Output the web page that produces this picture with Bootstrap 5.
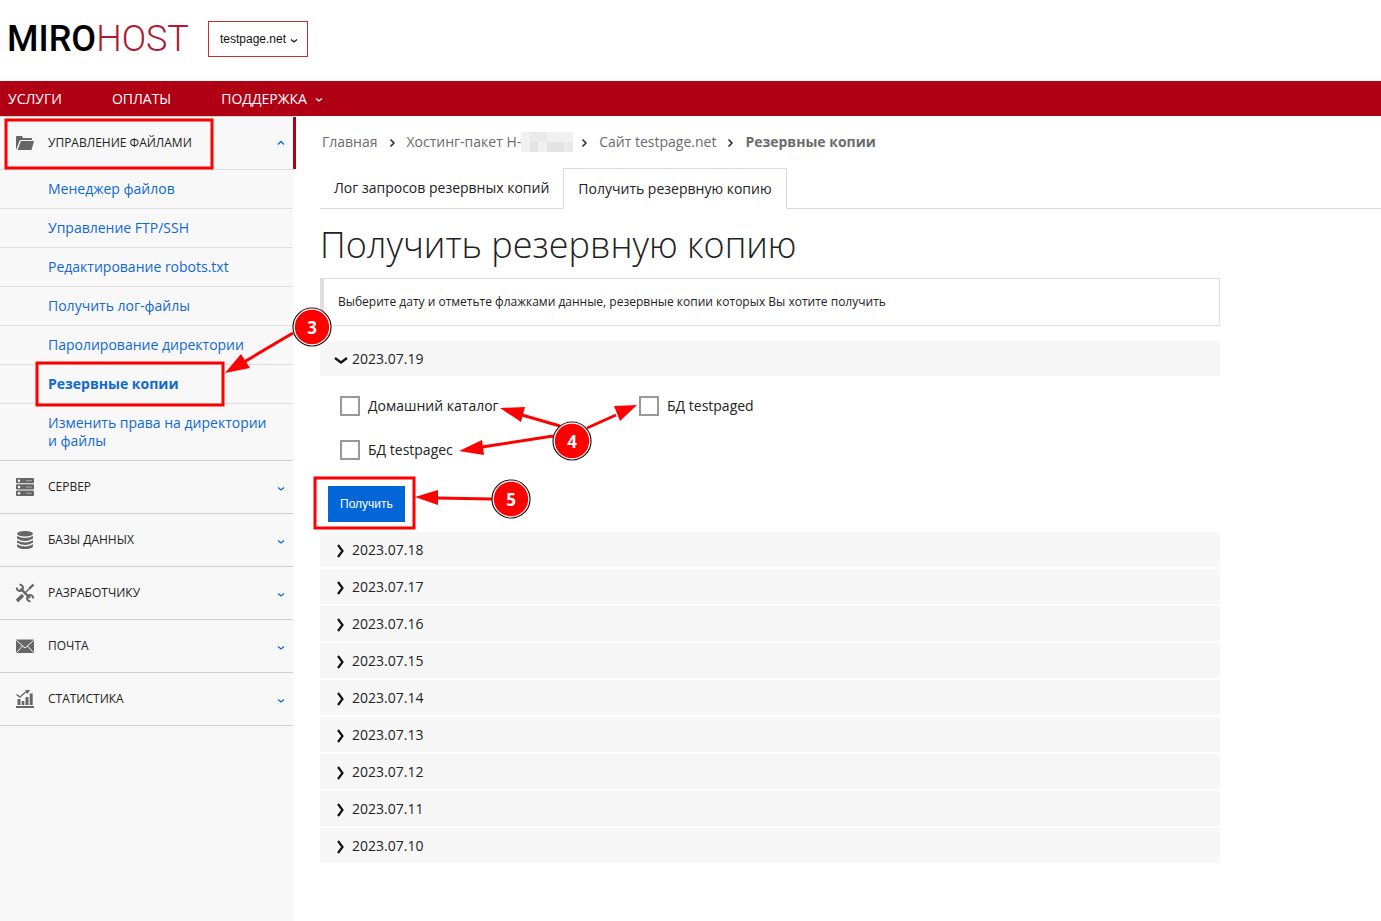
<!DOCTYPE html>
<html lang="ru">
<head>
<meta charset="utf-8">
<meta name="viewport" content="width=device-width, initial-scale=1">
<title>Получить резервную копию</title>
<link href="https://cdn.jsdelivr.net/npm/bootstrap@5.3.0/dist/css/bootstrap.min.css" rel="stylesheet">
<style>
body{font-family:"Open Sans","Noto Sans",sans-serif;font-size:14px;line-height:18px;color:#222;background:#fff}
a{text-decoration:none}
.top-bar{height:81px;padding:0 8px 4px 7px}
.logo-text{font-family:Roboto,sans-serif;font-size:36px;line-height:36px;font-weight:500;color:#000;width:181px}
.logo-text span{font-weight:300;color:#ae1a31}
.site-btn{font-family:"Liberation Sans",Arial,sans-serif;font-size:12px;line-height:18px;border:1px solid #c9302c;border-radius:0;padding:8px 9px 8px 11px;color:#111;margin-left:20px}
.main-nav{background:#b00014;min-height:35px;padding:0 8px;gap:50px}
.main-nav a{color:#fff;line-height:35px}
.side-menu{width:293px;background:#f8f8f8;border-top:1px solid #cfcfcf}
.group-btn{height:52px;padding:0 8px 0 15px;border:0;background:none;font-size:12px;color:#222;width:100%;text-align:left}
.group-btn .group-icon{width:20px;height:20px;margin-right:13px;color:#666}
.group-btn.current{width:296px;border-right:3px solid #b00014}
.side-group{border-bottom:1px solid #cfcfcf}
.side-links a{display:block;padding:10px 16px 10px 48px;border-top:1px solid #dedede;color:#1068d4}
.chev{width:8px;height:8px;fill:none;stroke:currentColor;stroke-width:1.3}
.blue{color:#1068d4}
.page-main{padding:16px 0 0 27px}
.crumbs{padding:0 2px;gap:12px;color:#6b6b6b}
.crumbs a{color:#6b6b6b}
.crumb-sep{width:5px;height:10px;margin-top:2px;fill:none;stroke:#222;stroke-width:1.5}
.hidden-id{width:52px;height:20px;margin-right:-3px}
.page-tabs{margin-top:16px;border-bottom:1px solid #dadada}
.page-tabs .nav-link{border:1px solid transparent;border-radius:0;padding:9px 13px 11px;color:#222;margin-bottom:-1px;line-height:19px}
.page-tabs .nav-link.active{border-color:#dadada #dadada #fff;color:#222;background:#fff;padding:10px 14px}
.page-title{font-size:36px;line-height:48px;font-weight:300;margin:12px 0 9px}
.content-col{max-width:900px}
.note{border:1px solid #dedede;border-left-width:4px;padding:14px;font-size:12px;margin-bottom:15px}
.date-btn{height:35px;border:0;background:#f7f7f7;width:100%;text-align:left;padding:0 14px;gap:4px;color:#222}
.date-btn svg{width:14px;height:14px;margin-top:3px;fill:none;stroke:#111;stroke-width:2.2}
.date-list{display:grid;gap:2px}
.copies{padding:20px 20px 26px;display:grid;grid-template-columns:299px 1fr;gap:24px 0}
.copies label{display:flex;align-items:center;gap:8px}
.copies .form-check-input[type=checkbox]{width:20px;height:20px;margin:0;border:2px solid #999;border-radius:0}
.get-btn{font-family:"Liberation Sans",Arial,sans-serif;background:#0366d6;color:#fff;font-size:12px;line-height:18px;border:0;border-radius:0;padding:9px 12px;margin:0 0 10px 8px}
.marks{position:absolute;left:0;top:0;width:640px;height:540px;pointer-events:none}
.marks text{font-weight:700;font-size:17px;fill:#fff;text-anchor:middle}
</style>
</head>
<body class="position-relative">
<div class="d-flex flex-column min-vh-100">
<header class="top-bar d-flex align-items-center">
  <a href="#" class="logo-text">MIRO<span>HOST</span></a>
  <button type="button" class="btn site-btn d-flex align-items-center">testpage.net<svg class="chev ms-1 mt-1" viewBox="0 0 8 8"><path d="M1 2.500 4 5 7 2.500"/></svg></button>
</header>
<nav class="main-nav d-flex flex-wrap">
  <a href="#">УСЛУГИ</a><a href="#">ОПЛАТЫ</a>
  <a href="#">ПОДДЕРЖКА <svg class="chev ms-1" viewBox="0 0 8 8"><path d="M1 2.500 4 5 7 2.500"/></svg></a>
</nav>
<div class="d-flex flex-grow-1">
  <aside class="side-menu flex-shrink-0">
    <div class="side-group">
      <button type="button" class="group-btn current d-flex align-items-center">
        <svg class="group-icon" viewBox="0 0 20 20" fill="currentColor"><path d="M1 4q0-1 1-1h5l1 2h8q1 0 1 1v1H6q-1 0-1.500 1L1.500 16H1z"/><path d="M6 8H19l-2.500 9H2.500z"/></svg>УПРАВЛЕНИЕ ФАЙЛАМИ
        <svg class="chev blue ms-auto" viewBox="0 0 8 8"><path d="M1 5.500 4 2.500 7 5.500"/></svg></button>
      <div class="side-links">
        <a href="#">Менеджер файлов</a>
        <a href="#">Управление FTP/SSH</a>
        <a href="#">Редактирование robots.txt</a>
        <a href="#">Получить лог-файлы</a>
        <a href="#">Паролирование директории</a>
        <a href="#" class="fw-bold">Резервные копии</a>
        <a href="#">Изменить права на директории и файлы</a>
      </div>
    </div>
    <div class="side-group"><button type="button" class="group-btn d-flex align-items-center">
      <svg class="group-icon" viewBox="0 0 20 20"><g fill="currentColor"><rect x="1" y="1" width="18" height="5.300" rx="1"/><rect x="1" y="7.300" width="18" height="5.300" rx="1"/><rect x="1" y="13.600" width="18" height="5.300" rx="1"/></g><g fill="#f8f8f8"><circle cx="4" cy="3.700" r="1.200"/><circle cx="4" cy="10" r="1.200"/><circle cx="4" cy="16.300" r="1.200"/></g><path d="M11 3.700h6M11 10h6M11 16.300h6" stroke="#aaa"/></svg>СЕРВЕР
      <svg class="chev blue ms-auto mt-1" viewBox="0 0 8 8"><path d="M1 2.500 4 5 7 2.500"/></svg></button></div>
    <div class="side-group"><button type="button" class="group-btn d-flex align-items-center">
      <svg class="group-icon" viewBox="0 0 20 20" fill="currentColor"><ellipse cx="10" cy="3.800" rx="8" ry="2.800"/><path d="M2 6q8 4 16 0v2.500q-8 5-16 0zM2 10.200q8 4.500 16 0v2.300q-8 5-16 0zM2 14.200q8 4.500 16 0v2q-1 2.800-8 2.800t-8-2.800z"/></svg>БАЗЫ ДАННЫХ
      <svg class="chev blue ms-auto mt-1" viewBox="0 0 8 8"><path d="M1 2.500 4 5 7 2.500"/></svg></button></div>
    <div class="side-group"><button type="button" class="group-btn d-flex align-items-center">
      <svg class="group-icon" viewBox="0 0 20 20" fill="none" stroke="currentColor"><path d="M5.500 5.500 15 15" stroke-width="2.400"/><path d="M4.500 1.800A3.100 3.100 0 1 1 1.800 4.500M15.500 18.200A3.100 3.100 0 1 1 18.200 15.500" stroke-width="2"/><path d="M2 18 8 12" stroke-width="3.600"/><path d="M9 11 16 4" stroke-width="1.400"/><path d="M14.500 5.500 18.500 1.500" stroke-width="2.400"/></svg>РАЗРАБОТЧИКУ
      <svg class="chev blue ms-auto mt-1" viewBox="0 0 8 8"><path d="M1 2.500 4 5 7 2.500"/></svg></button></div>
    <div class="side-group"><button type="button" class="group-btn d-flex align-items-center">
      <svg class="group-icon" viewBox="0 0 20 20"><rect x="1" y="3.500" width="18" height="13.500" rx="1" fill="currentColor"/><path d="M1.500 4.500 10 12 18.500 4.500M1.500 16.500 7.500 10M18.500 16.500 12.500 10" fill="none" stroke="#f8f8f8"/></svg>ПОЧТА
      <svg class="chev blue ms-auto mt-1" viewBox="0 0 8 8"><path d="M1 2.500 4 5 7 2.500"/></svg></button></div>
    <div class="side-group"><button type="button" class="group-btn d-flex align-items-center">
      <svg class="group-icon" viewBox="0 0 20 20" fill="currentColor"><path d="M1 17h18v2H1zM2.500 10h3v6h-3zM6.700 12h2.600v4H6.700zM10.500 8h3v8h-3zM14.700 4.500h3V16h-3z"/><path d="M1.500 5.500 5 8 10 3.500 13 2.500" fill="none" stroke="currentColor" stroke-width="1.400"/><path d="M10 1h5l-2.500 4z"/></svg>СТАТИСТИКА
      <svg class="chev blue ms-auto mt-1" viewBox="0 0 8 8"><path d="M1 2.500 4 5 7 2.500"/></svg></button></div>
  </aside>
  <main class="page-main flex-grow-1">
    <div class="crumbs d-flex align-items-center">
      <a href="#">Главная</a><svg class="crumb-sep" viewBox="0 0 5 10"><path d="M.5 1.500 4 5 .5 8.500"/></svg>
      <a href="#" class="d-flex align-items-center">Хостинг-пакет H-<svg class="hidden-id my-n1" viewBox="0 0 52 20" shape-rendering="crispEdges"><path fill="#f1f1f1" d="M0 0h52v20H0z"/><path fill="#ebebec" d="M9 0h17v10H9z"/><path fill="#e3e3e4" d="M9 10h8v10H9zM26 10h17v10H26z"/><path fill="#e9eaeb" d="M43 10h9v10h-9z"/></svg></a>
      <svg class="crumb-sep" viewBox="0 0 5 10"><path d="M.5 1.500 4 5 .5 8.500"/></svg>
      <a href="#">Сайт testpage.net</a><svg class="crumb-sep" viewBox="0 0 5 10"><path d="M.5 1.500 4 5 .5 8.500"/></svg>
      <strong>Резервные копии</strong>
    </div>
    <nav class="page-tabs nav">
      <a class="nav-link" href="#">Лог запросов резервных копий</a>
      <a class="nav-link active" href="#">Получить резервную копию</a>
    </nav>
    <div class="content-col">
      <h1 class="page-title">Получить резервную копию</h1>
      <div class="note">Выберите дату и отметьте флажками данные, резервные копии которых Вы хотите получить</div>
      <button type="button" class="date-btn d-flex align-items-center" data-bs-toggle="collapse" data-bs-target="#copy19"><svg viewBox="0 0 14 14"><path d="M1 5 7 9.500 13 5"/></svg>2023.07.19</button>
      <form id="copy19" class="collapse show">
        <div class="copies">
          <label><input type="checkbox" class="form-check-input">Домашний каталог</label>
          <label><input type="checkbox" class="form-check-input">БД testpaged</label>
          <label><input type="checkbox" class="form-check-input">БД testpagec</label>
        </div>
        <button type="button" class="btn get-btn">Получить</button>
      </form>
      <div class="date-list">
        <button type="button" class="date-btn d-flex align-items-center"><svg viewBox="0 0 14 14"><path d="M4 1 8.500 7 4 13"/></svg>2023.07.18</button>
        <button type="button" class="date-btn d-flex align-items-center"><svg viewBox="0 0 14 14"><path d="M4 1 8.500 7 4 13"/></svg>2023.07.17</button>
        <button type="button" class="date-btn d-flex align-items-center"><svg viewBox="0 0 14 14"><path d="M4 1 8.500 7 4 13"/></svg>2023.07.16</button>
        <button type="button" class="date-btn d-flex align-items-center"><svg viewBox="0 0 14 14"><path d="M4 1 8.500 7 4 13"/></svg>2023.07.15</button>
        <button type="button" class="date-btn d-flex align-items-center"><svg viewBox="0 0 14 14"><path d="M4 1 8.500 7 4 13"/></svg>2023.07.14</button>
        <button type="button" class="date-btn d-flex align-items-center"><svg viewBox="0 0 14 14"><path d="M4 1 8.500 7 4 13"/></svg>2023.07.13</button>
        <button type="button" class="date-btn d-flex align-items-center"><svg viewBox="0 0 14 14"><path d="M4 1 8.500 7 4 13"/></svg>2023.07.12</button>
        <button type="button" class="date-btn d-flex align-items-center"><svg viewBox="0 0 14 14"><path d="M4 1 8.500 7 4 13"/></svg>2023.07.11</button>
        <button type="button" class="date-btn d-flex align-items-center"><svg viewBox="0 0 14 14"><path d="M4 1 8.500 7 4 13"/></svg>2023.07.10</button>
      </div>
    </div>
  </main>
</div>
</div>
<!-- step callouts: frames, arrows and numbered circles -->
<svg class="marks" viewBox="0 0 640 540">
  <g fill="none" stroke="#f00" stroke-width="3"><rect x="6" y="120" width="206" height="48"/><rect x="37" y="363" width="186" height="42"/><rect x="315" y="478" width="99" height="50"/>
  <path d="M293 333 244 362M560 426 522 415M587 428 616 415M553 436 482 447M492 499 437 498"/></g>
  <path fill="#f00" d="M225 373 241 354 250 368zM500 408 525 407 521 422zM637 405 614 406 620 421zM459 451 482 440 484 455zM415 497 438 490 438 505z"/>
  <g fill="#f00" stroke="#111" stroke-width="1.200"><circle cx="312" cy="327" r="19"/><circle cx="572" cy="441" r="19"/><circle cx="511" cy="499" r="19"/></g>
  <g fill="none" stroke="#fff" stroke-width="1.200"><circle cx="312" cy="327" r="17.800"/><circle cx="572" cy="441" r="17.800"/><circle cx="511" cy="499" r="17.800"/></g>
  <text x="312" y="334">3</text><text x="572" y="448">4</text><text x="511" y="506">5</text>
</svg>
<script src="https://cdn.jsdelivr.net/npm/bootstrap@5.3.0/dist/js/bootstrap.bundle.min.js"></script>
</body>
</html>
